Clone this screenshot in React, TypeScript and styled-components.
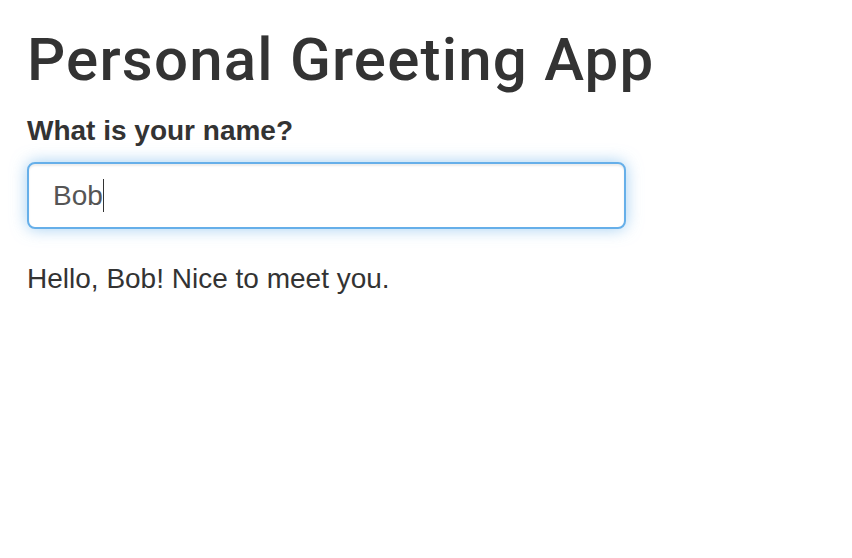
import React, { useEffect, useRef, useState } from "react";
import styled, { createGlobalStyle } from "styled-components";

const GlobalStyle = createGlobalStyle`
    html, body {
        margin: 0;
        padding: 0;
        background: #ffffff;
    }
    body {
        font-family: "Liberation Sans", Arial, Helvetica, sans-serif;
        color: #333333;
    }
`;

const Page = styled.div`
    padding: 27px 27px 0 27px;
`;

const Title = styled.h2`
    margin: 0 0 18px 0;
    font-family: Roboto, "Liberation Sans", Arial, sans-serif;
    font-size: 60px;
    line-height: 66px;
    font-weight: 500;
    letter-spacing: 1.2px;
    color: #333333;
`;

const FormGroup = styled.div`
    display: flex;
    flex-direction: column;
    align-items: flex-start;
    margin-bottom: 30px;
`;

const Label = styled.label`
    font-size: 28px;
    line-height: 40px;
    font-weight: 700;
    margin-bottom: 11px;
`;

const Field = styled.div`
    position: relative;
    width: 599px;
`;

const NameInput = styled.input`
    box-sizing: border-box;
    display: block;
    width: 100%;
    height: 67px;
    padding: 12px 24px;
    font-family: "Liberation Sans", Arial, sans-serif;
    font-size: 28px;
    color: #555555;
    caret-color: transparent;
    background: #ffffff;
    border: 2px solid #66afe9;
    border-radius: 8px;
    outline: none;
    box-shadow: inset 0 2px 2px rgba(0, 0, 0, 0.075),
        0 0 16px rgba(102, 175, 233, 0.6);
`;

const Caret = styled.span`
    position: absolute;
    top: 17px;
    width: 1.5px;
    height: 33px;
    background: #333333;
    pointer-events: none;
`;

const Greeting = styled.div`
    font-size: 28px;
    line-height: 40px;
`;

const measure = (text: string) => {
    const ctx = document.createElement("canvas").getContext("2d");
    if (!ctx) return text.length * 16;
    ctx.font = '28px "Liberation Sans", Arial, sans-serif';
    return ctx.measureText(text).width;
};

const App: React.FC = () => {
    const [name, setName] = useState("Bob");
    const inputRef = useRef<HTMLInputElement>(null);

    useEffect(() => {
        inputRef.current?.focus();
    }, []);

    return (
        <>
            <GlobalStyle />
            <Page>
                <Title>Personal Greeting App</Title>
                <FormGroup>
                    <Label htmlFor="name">What is your name?</Label>
                    <Field>
                        <NameInput
                            ref={inputRef}
                            id="name"
                            type="text"
                            value={name}
                            onChange={(e) => setName(e.target.value)}
                        />
                        <Caret style={{ left: 26 + measure(name) }} />
                    </Field>
                </FormGroup>
                <Greeting>Hello, {name}! Nice to meet you.</Greeting>
            </Page>
        </>
    );
};

export default App;
